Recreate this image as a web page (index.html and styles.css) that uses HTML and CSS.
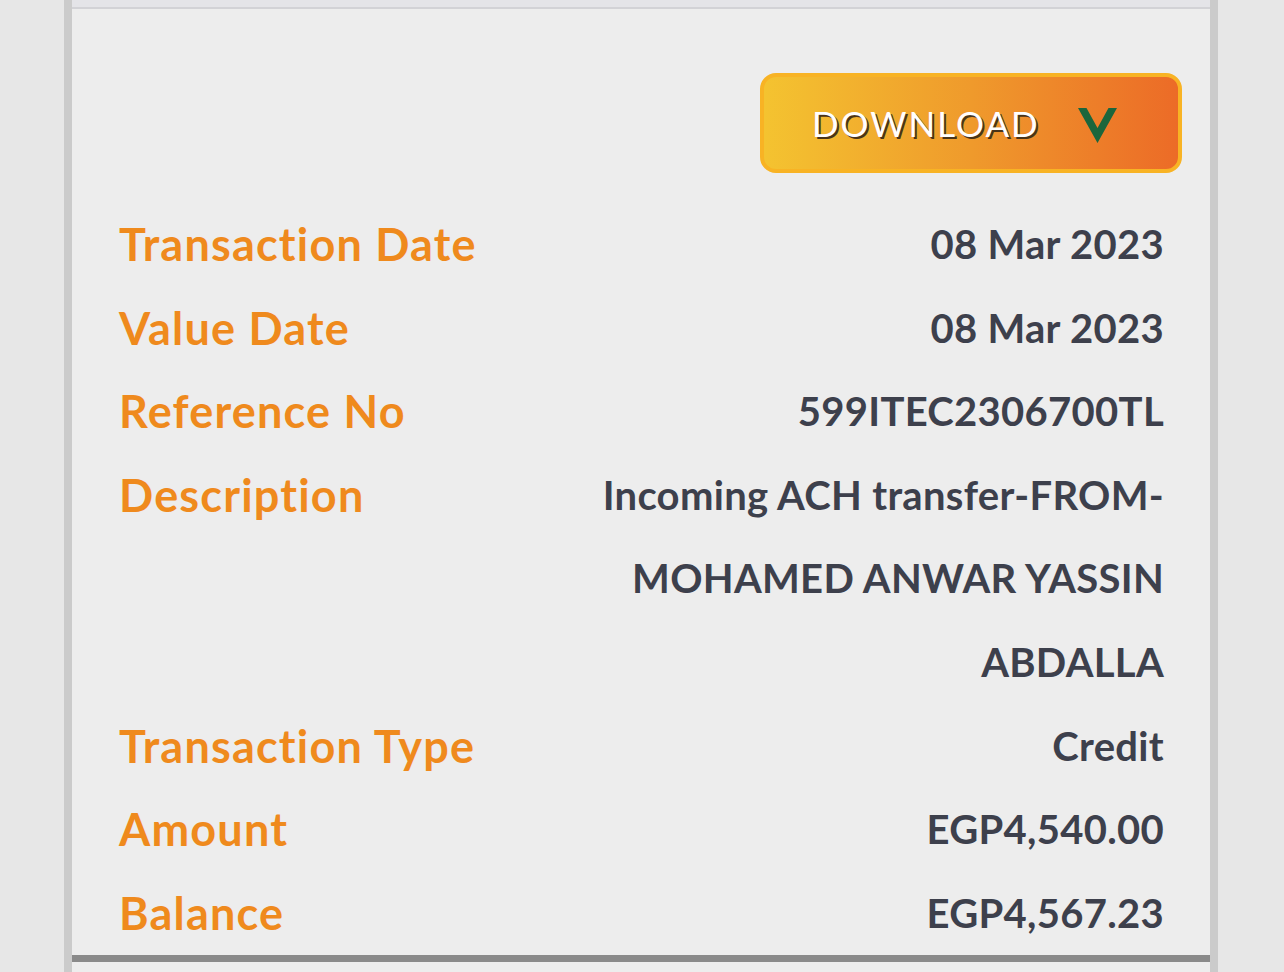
FILE: index.html
```html
<!DOCTYPE html>
<html lang="en">
<head>
  <meta charset="UTF-8" />
  <meta name="viewport" content="width=device-width, initial-scale=1.0" />
  <title>Transaction Details</title>
  <link rel="stylesheet" href="styles.css">
</head>
<body>
  <div class="page">
    <div class="card">
      <div class="card-top"></div>
      <div class="card-body">
        <div class="actions">
          <button class="download" type="button">
            <span class="download-label">DOWNLOAD</span>
            <svg class="chevron" width="39" height="35" viewBox="0 0 39 35" aria-hidden="true">
              <polygon points="0,0 8.5,0 19.5,20 30.5,0 39,0 19.5,35" fill="#1b663c" />
            </svg>
          </button>
        </div>
        <dl class="details">
          <div class="row"><dt>Transaction Date</dt><dd>08 Mar 2023</dd></div>
          <div class="row"><dt>Value Date</dt><dd>08 Mar 2023</dd></div>
          <div class="row"><dt>Reference No</dt><dd>599ITEC2306700TL</dd></div>
          <div class="row"><dt>Description</dt><dd>Incoming ACH transfer-FROM- MOHAMED ANWAR YASSIN ABDALLA</dd></div>
          <div class="row"><dt>Transaction Type</dt><dd>Credit</dd></div>
          <div class="row"><dt>Amount</dt><dd>EGP4,540.00</dd></div>
          <div class="row"><dt>Balance</dt><dd>EGP4,567.23</dd></div>
        </dl>
      </div>
      <div class="card-bottom"></div>
    </div>
  </div>
</body>
</html>
```
FILE: styles.css
```css
/* Basic Reset */
* {
  margin: 0;
  padding: 0;
  box-sizing: border-box;
}
body {
  font-family: Lato, "Open Sans", sans-serif;
  background-color: #e7e7e7;
  color: #3d404c;
  height: 972px;
  overflow: hidden;
}
.page {
  padding-left: 64px;
}
/* Card with grey side rails */
.card {
  width: 1154px;
  background-color: #ededed;
  border-left: 8px solid #cbcbcb;
  border-right: 8px solid #cbcbcb;
  min-height: 972px;
}
.card-top {
  height: 9px;
  background-color: #e4e4e8;
  border-bottom: 2px solid #d2d2d6;
}
.card-body {
  padding: 65px 46px 0 47px;
}
.card-bottom {
  height: 7px;
  background-color: #8a8a8a;
}
/* Download button */
.actions {
  display: flex;
  justify-content: flex-end;
  margin-top: -1px;
  margin-right: -18px;
  margin-bottom: 30px;
}
.download {
  width: 422px;
  height: 100px;
  display: flex;
  align-items: center;
  padding-left: 48px;
  gap: 38px;
  border: 4px solid #f8b324;
  border-radius: 16px;
  background: linear-gradient(to right, #f4c330, #ef9a2c 50%, #ec6b27);
  cursor: pointer;
}
.download-label {
  font-family: Lato, sans-serif;
  font-size: 35px;
  font-weight: 400;
  letter-spacing: 2px;
  color: #fff;
  text-shadow: 2px 2px 0 #4a3418;
}
.chevron {
  display: block;
  margin-top: 4px;
}
/* Detail rows */
.details .row {
  display: flex;
  justify-content: space-between;
  line-height: 83.6px;
}
.details dt {
  font-size: 45px;
  font-weight: 700;
  letter-spacing: 1.2px;
  color: #ef8a1d;
  white-space: nowrap;
}
.details dd {
  width: 590px;
  text-align: right;
  font-size: 40px;
  font-weight: 700;
  letter-spacing: 0.3px;
  color: #3d404c;
}
```
